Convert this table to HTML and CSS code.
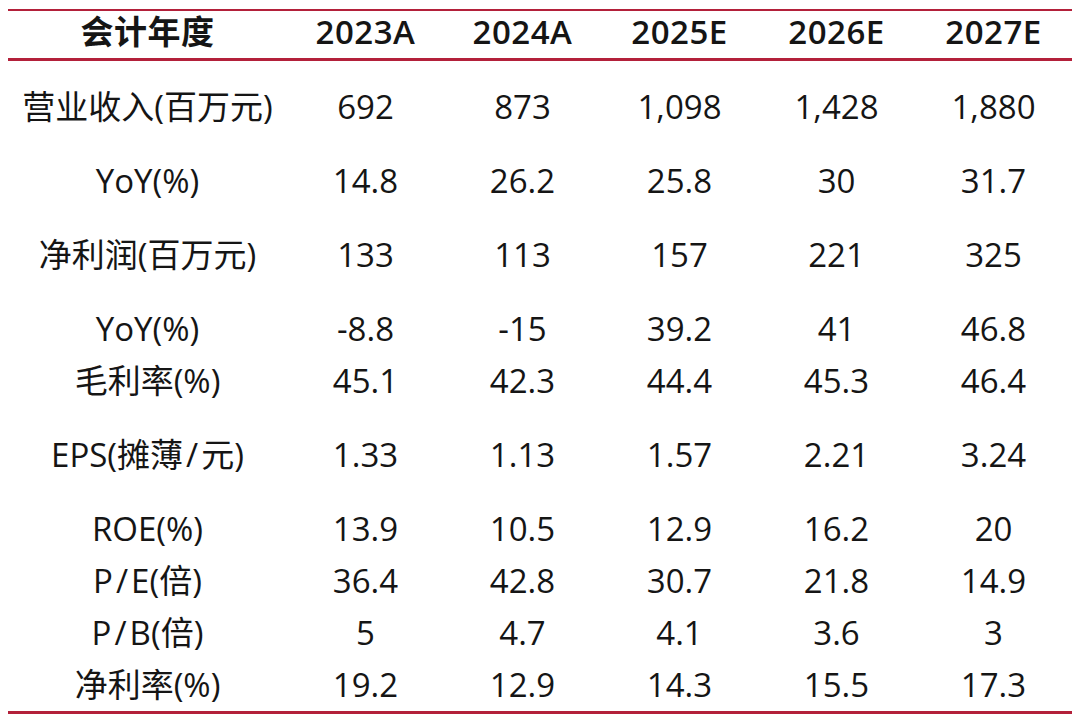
FILE: index.html
```html
<!DOCTYPE html>
<html lang="zh">
<head>
<meta charset="utf-8">
<title>盈利预测</title>
<link rel="stylesheet" href="styles.css">
</head>
<body>
<div class="table">
  <div class="row head">
    <div class="label">会计年度</div><div>2023A</div><div>2024A</div><div>2025E</div><div>2026E</div><div>2027E</div>
  </div>
  <div class="row first">
    <div class="label">营业收入(百万元)</div><div>692</div><div>873</div><div>1,098</div><div>1,428</div><div>1,880</div>
  </div>
  <div class="row sp">
    <div class="label">YoY(%)</div><div>14.8</div><div>26.2</div><div>25.8</div><div>30</div><div>31.7</div>
  </div>
  <div class="row sp">
    <div class="label">净利润(百万元)</div><div>133</div><div>113</div><div>157</div><div>221</div><div>325</div>
  </div>
  <div class="row sp">
    <div class="label">YoY(%)</div><div>-8.8</div><div>-15</div><div>39.2</div><div>41</div><div>46.8</div>
  </div>
  <div class="row">
    <div class="label">毛利率(%)</div><div>45.1</div><div>42.3</div><div>44.4</div><div>45.3</div><div>46.4</div>
  </div>
  <div class="row sp">
    <div class="label">EPS(摊薄<span class="sl">/</span>元)</div><div>1.33</div><div>1.13</div><div>1.57</div><div>2.21</div><div>3.24</div>
  </div>
  <div class="row sp">
    <div class="label">ROE(%)</div><div>13.9</div><div>10.5</div><div>12.9</div><div>16.2</div><div>20</div>
  </div>
  <div class="row">
    <div class="label">P<span class="sl">/</span>E(倍)</div><div>36.4</div><div>42.8</div><div>30.7</div><div>21.8</div><div>14.9</div>
  </div>
  <div class="row">
    <div class="label">P<span class="sl">/</span>B(倍)</div><div>5</div><div>4.7</div><div>4.1</div><div>3.6</div><div>3</div>
  </div>
  <div class="row">
    <div class="label">净利率(%)</div><div>19.2</div><div>12.9</div><div>14.3</div><div>15.5</div><div>17.3</div>
  </div>
</div>
</body>
</html>
```
FILE: styles.css
```css
html, body {
  margin: 0;
  padding: 0;
  background: #ffffff;
}
body {
  font-family: "Open Sans", "Noto Sans CJK SC", sans-serif;
  color: #151515;
  width: 1080px;
  height: 721px;
  overflow: hidden;
}
.table {
  margin: 9px 8px 0 8px;
  width: 1064px;
  border-top: 2px solid #b3203a;
  border-bottom: 3px solid #b3203a;
}
.row {
  display: grid;
  grid-template-columns: 279px repeat(5, 157px);
  height: 52px;
  align-items: center;
  font-size: 33px;
  line-height: 52px;
}
.row > div {
  text-align: center;
  white-space: nowrap;
}
.row.head {
  box-sizing: border-box;
  height: 50px;
  line-height: 40px;
  padding-bottom: 6px;
  font-weight: 600;
  letter-spacing: 0.5px;
  border-bottom: 3px solid #b3203a;
}
.row.first {
  margin-top: 20px;
}
.row.sp {
  margin-top: 22px;
}
.sl {
  margin: 0 3px;
}
```
